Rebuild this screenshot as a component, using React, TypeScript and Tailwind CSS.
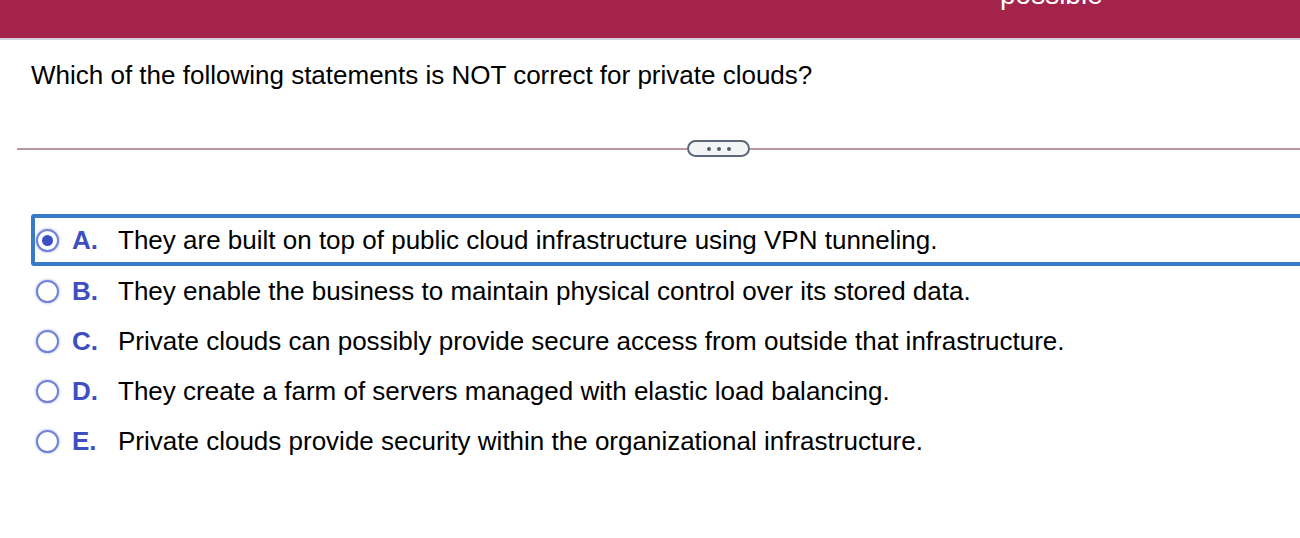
const options = [
  { letter: 'A', text: 'They are built on top of public cloud infrastructure using VPN tunneling.' },
  { letter: 'B', text: 'They enable the business to maintain physical control over its stored data.' },
  { letter: 'C', text: 'Private clouds can possibly provide secure access from outside that infrastructure.' },
  { letter: 'D', text: 'They create a farm of servers managed with elastic load balancing.' },
  { letter: 'E', text: 'Private clouds provide security within the organizational infrastructure.' },
]

function Radio({ checked }: { checked: boolean }) {
  return (
    <span className="flex h-[23px] w-[23px] shrink-0 items-center justify-center rounded-full border-[2.5px] border-[#7183d6] bg-white shadow-[0_0_2px_1px_rgba(113,131,214,0.35)]">
      {checked && <span className="h-[11px] w-[11px] rounded-full bg-[#3b50c2]" />}
    </span>
  )
}

export default function App() {
  const selected = 'A'

  return (
    <div className="h-[538px] w-[1300px] overflow-hidden bg-white font-['Liberation_Sans',Arial,sans-serif]">
      <header className="flex h-[40px] items-start overflow-hidden border-b-2 border-[#d2d2da] bg-[#a3234b]">
        <span className="-mt-[19px] ml-[1000px] text-[28px] leading-none text-white">possible</span>
      </header>

      <p className="ml-[31px] mt-[22px] text-[26px] leading-none text-black">
        Which of the following statements is NOT correct for private clouds?
      </p>

      <div className="ml-[17px] mt-[52px] flex items-center">
        <div className="h-[2px] w-[670px] bg-[#b9979f]" />
        <button className="flex h-[17px] w-[63px] items-center justify-center gap-[6px] rounded-full border-2 border-[#5d6876] bg-[#f3f4f6]">
          <span className="h-[4px] w-[4px] rounded-full bg-[#555b66]" />
          <span className="h-[4px] w-[4px] rounded-full bg-[#555b66]" />
          <span className="h-[4px] w-[4px] rounded-full bg-[#555b66]" />
        </button>
        <div className="h-[2px] flex-1 bg-[#b9979f]" />
      </div>

      <ul className="mt-[57px]">
        {options.map((o) => {
          const isSel = o.letter === selected
          return (
            <li
              key={o.letter}
              className={
                isSel
                  ? 'ml-[31px] flex h-[52px] w-[1290px] items-center rounded-[3px] border-4 border-[#3a7bc8] pl-[1px] text-[26px] leading-none'
                  : 'ml-[31px] flex h-[50px] items-center pl-[5px] text-[26px] leading-none'
              }
            >
              <Radio checked={isSel} />
              <span className="ml-[13px] w-[46px] font-bold text-[#3d4fc1]">{o.letter}.</span>
              <span className="text-black">{o.text}</span>
            </li>
          )
        })}
      </ul>
    </div>
  )
}
